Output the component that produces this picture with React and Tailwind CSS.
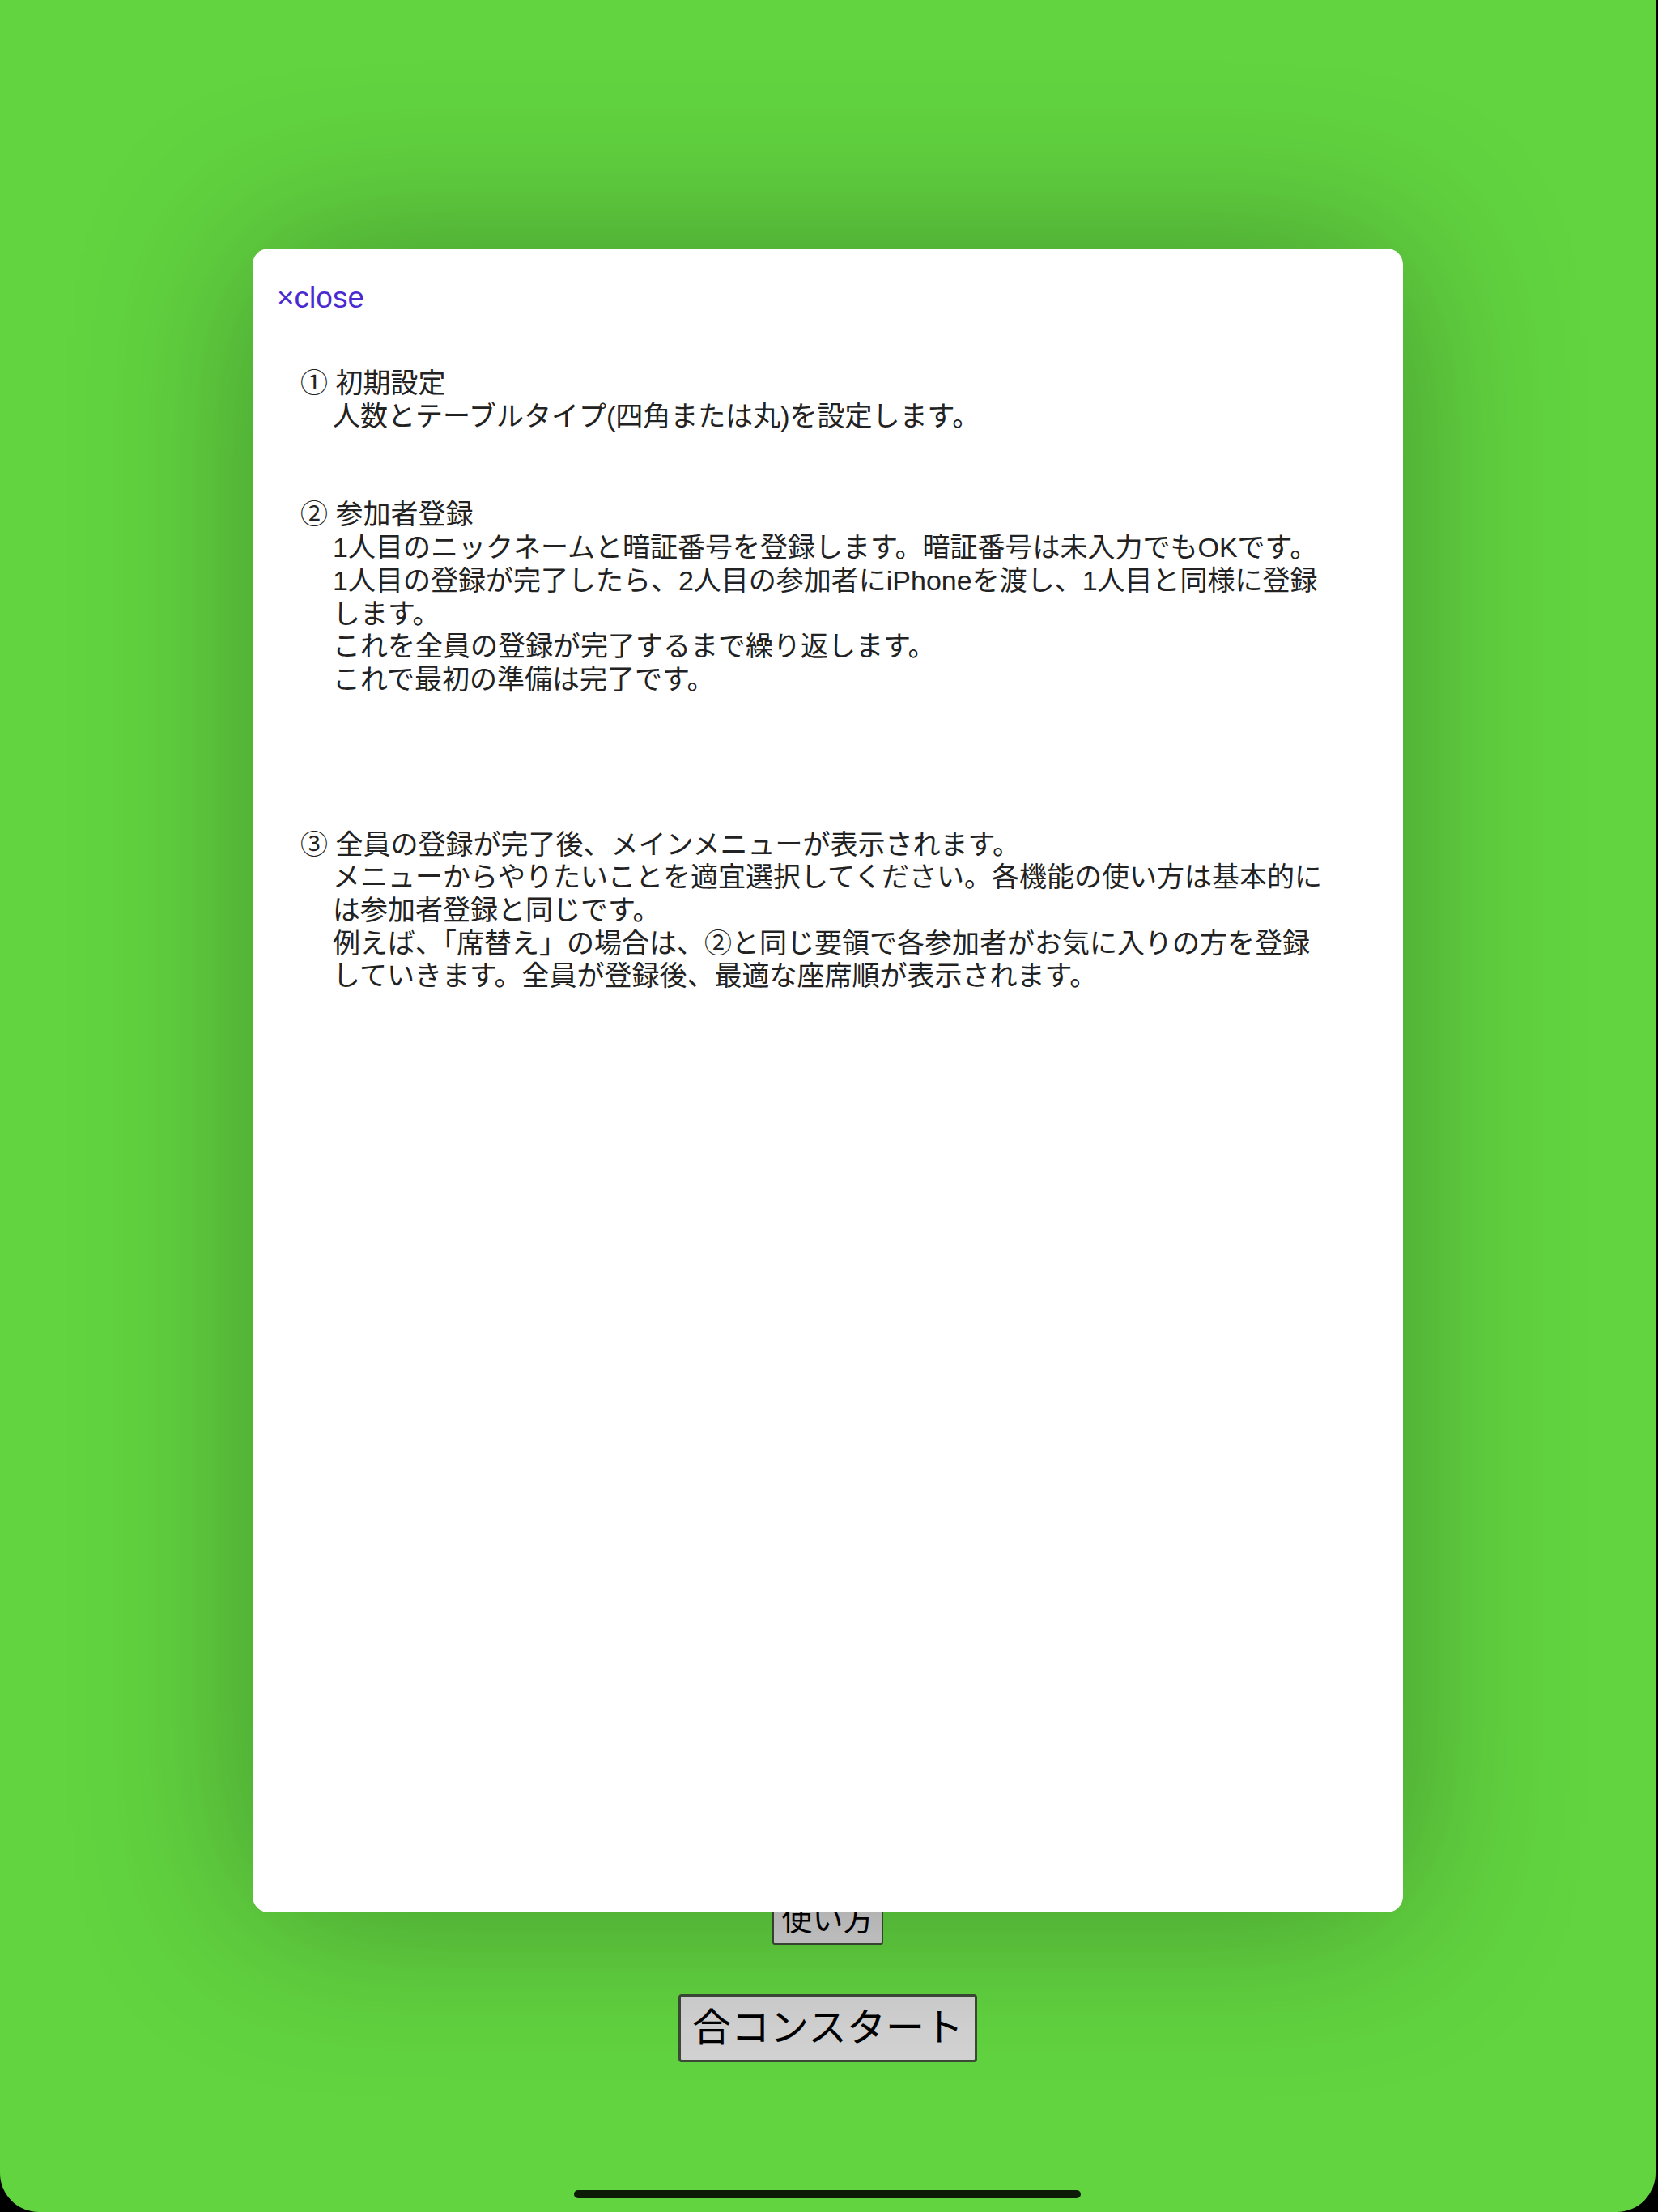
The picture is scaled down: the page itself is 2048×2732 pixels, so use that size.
export default function App() {
  const sections = [
    {
      title: '① 初期設定',
      lines: ['人数とテーブルタイプ(四角または丸)を設定します。'],
      gap: '',
    },
    {
      title: '② 参加者登録',
      lines: [
        '1人目のニックネームと暗証番号を登録します。暗証番号は未入力でもOKです。',
        '1人目の登録が完了したら、2人目の参加者にiPhoneを渡し、1人目と同様に登録',
        'します。',
        'これを全員の登録が完了するまで繰り返します。',
        'これで最初の準備は完了です。',
      ],
      gap: 'mt-[81px]',
    },
    {
      title: '③ 全員の登録が完了後、メインメニューが表示されます。',
      lines: [
        'メニューからやりたいことを適宜選択してください。各機能の使い方は基本的に',
        'は参加者登録と同じです。',
        '例えば、「席替え」の場合は、②と同じ要領で各参加者がお気に入りの方を登録',
        'していきます。全員が登録後、最適な座席順が表示されます。',
      ],
      gap: 'mt-[163px]',
    },
  ];

  return (
    <div className="w-[2048px] h-[2732px] bg-black font-['Liberation_Sans','Noto_Sans_CJK_JP',sans-serif]">
      <div className="relative w-[2045px] h-full overflow-hidden rounded-b-[48px] bg-[#62d440]">
        {/* main screen */}
        <div className="flex flex-col items-center pt-[2340px]">
          <button className="px-[9px] py-[6px] text-[38px] leading-[46px] text-black bg-[#d4d4d4] border-2 border-[#3d4a38] rounded-[3px]">
            使い方
          </button>
          <button className="mt-[61px] px-[14px] py-[10px] text-[48px] leading-[58px] text-black bg-[#d4d4d4] border-[3px] border-[#3d4a38] rounded-[4px]">
            合コンスタート
          </button>
        </div>

        {/* how-to modal */}
        <div className="absolute top-[307px] left-[312px] w-[1421px] h-[2055px] bg-white rounded-[20px] shadow-[0_0_220px_rgba(0,0,0,0.3)] pt-[40px] pl-[30px]">
          <div className="text-[37px] leading-[41px] text-[#4a2bd0]">×close</div>
          <div className="mt-[65px] ml-[30px] text-[34px] leading-[40.7px] text-[#222] whitespace-nowrap">
            {sections.map((s, i) => (
              <div key={i} className={s.gap}>
                <div className="-ml-[1px]">{s.title}</div>
                {s.lines.map((line, j) => (
                  <div key={j} className="pl-[39px]">{line}</div>
                ))}
              </div>
            ))}
          </div>
        </div>

        {/* home indicator */}
        <div className="absolute bottom-[17px] left-[709px] w-[626px] h-[10px] rounded-full bg-[#0c1c07]" />
      </div>
    </div>
  );
}
